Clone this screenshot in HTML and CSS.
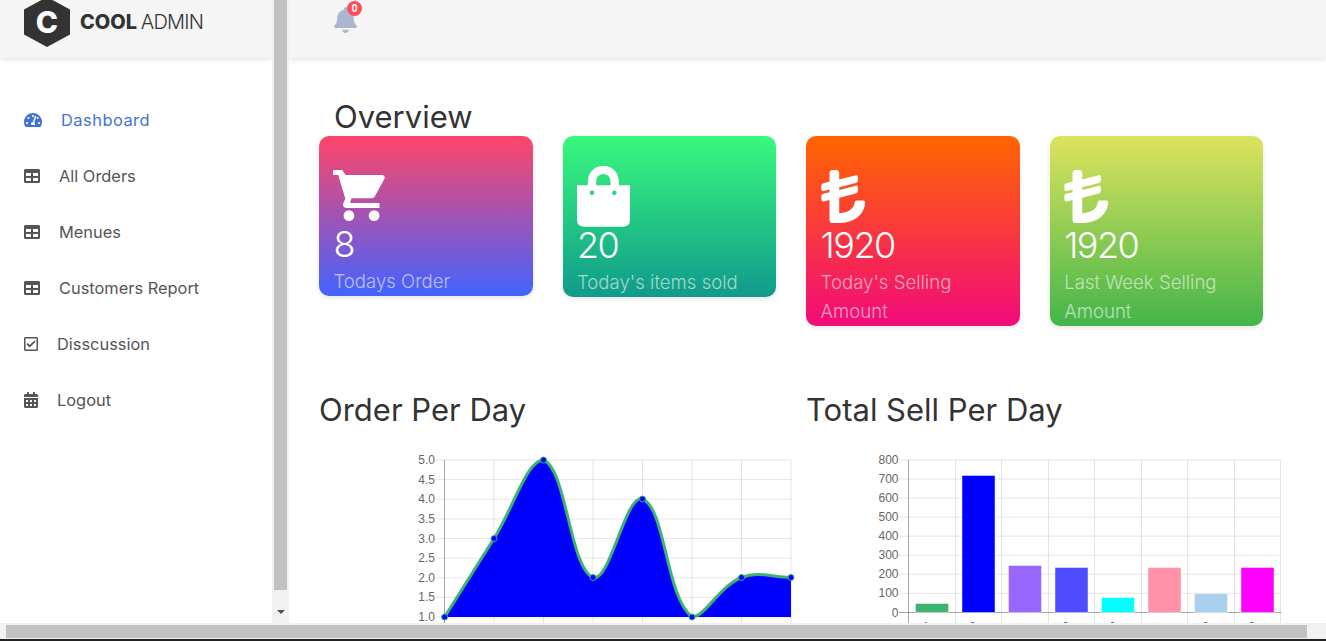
FILE: index.html
```html
<!DOCTYPE html>
<html>
  <head>
    <title>Cool Admin Dashboard</title>
    <link rel="stylesheet" href="styles.css">
  </head>
  <body>
    <div class="page">
      <div class="panes">
        <aside class="side">
          <div class="logo-bar">
            <span class="logo-hex">C</span>
            <span class="logo-text"><b>COOL</b> <span class="logo-light">ADMIN</span></span>
          </div>
          <ul class="side-menu">
            <li class="active">
              <svg class="ico-tacho" viewBox="0 0 576 512"><path d="M288 32C128.94 32 0 160.94 0 320c0 52.8 14.25 102.26 39.06 144.8 5.61 9.62 16.3 15.2 27.44 15.2h443c11.14 0 21.83-5.58 27.44-15.2C561.75 422.26 576 372.8 576 320c0-159.06-128.94-288-288-288zm0 64c14.71 0 26.58 10.13 30.32 23.65-1.11 2.26-2.64 4.23-3.45 6.67l-9.22 27.67c-5.13 3.49-10.97 6.01-17.64 6.01-17.67 0-32-14.33-32-32S270.33 96 288 96zM96 384c-17.67 0-32-14.33-32-32s14.33-32 32-32 32 14.33 32 32-14.33 32-32 32zm48-160c-17.67 0-32-14.33-32-32s14.33-32 32-32 32 14.33 32 32-14.33 32-32 32zm246.77-72.41l-61.33 184C343.13 347.33 352 364.54 352 384c0 11.72-3.38 22.55-8.88 32H232.88c-5.5-9.45-8.88-20.28-8.88-32 0-33.94 26.5-61.43 59.9-63.59l61.34-184.01c4.17-12.56 17.73-19.45 30.36-15.17 12.57 4.19 19.35 17.79 15.17 30.36zm14.66 57.2l15.52-46.55c3.47-1.29 7.13-2.23 11.05-2.23 17.67 0 32 14.33 32 32s-14.33 32-32 32c-11.38-.01-20.89-6.28-26.57-15.22zM480 384c-17.67 0-32-14.33-32-32s14.33-32 32-32 32 14.33 32 32-14.33 32-32 32z"/></svg>
              Dashboard
            </li>
            <li>
              <svg class="ico-table" viewBox="0 0 512 512"><path d="M464 32H48C21.49 32 0 53.49 0 80v352c0 26.51 21.49 48 48 48h416c26.51 0 48-21.49 48-48V80c0-26.51-21.49-48-48-48zM224 416H64v-96h160v96zm0-160H64v-96h160v96zm224 160H288v-96h160v96zm0-160H288v-96h160v96z"/></svg>
              All Orders
            </li>
            <li>
              <svg class="ico-table" viewBox="0 0 512 512"><path d="M464 32H48C21.49 32 0 53.49 0 80v352c0 26.51 21.49 48 48 48h416c26.51 0 48-21.49 48-48V80c0-26.51-21.49-48-48-48zM224 416H64v-96h160v96zm0-160H64v-96h160v96zm224 160H288v-96h160v96zm0-160H288v-96h160v96z"/></svg>
              Menues
            </li>
            <li>
              <svg class="ico-table" viewBox="0 0 512 512"><path d="M464 32H48C21.49 32 0 53.49 0 80v352c0 26.51 21.49 48 48 48h416c26.51 0 48-21.49 48-48V80c0-26.51-21.49-48-48-48zM224 416H64v-96h160v96zm0-160H64v-96h160v96zm224 160H288v-96h160v96zm0-160H288v-96h160v96z"/></svg>
              Customers Report
            </li>
            <li>
              <svg class="ico-small" viewBox="0 0 448 512"><path d="M400 32H48C21.49 32 0 53.49 0 80v352c0 26.51 21.49 48 48 48h352c26.51 0 48-21.49 48-48V80c0-26.51-21.49-48-48-48zm0 400H48V80h352v352zm-35.864-241.724L191.547 361.48c-4.705 4.667-12.303 4.637-16.97-.068l-90.781-91.516c-4.667-4.705-4.637-12.303.069-16.971l22.719-22.536c4.705-4.667 12.303-4.637 16.97.069l59.792 60.277 141.352-140.216c4.705-4.667 12.303-4.637 16.97.068l22.536 22.718c4.667 4.706 4.637 12.304-.068 16.971z"/></svg>
              Disscussion
            </li>
            <li>
              <svg class="ico-small" viewBox="0 0 448 512"><path d="M0 464c0 26.5 21.5 48 48 48h352c26.5 0 48-21.5 48-48V192H0v272zm320-196c0-6.6 5.4-12 12-12h40c6.6 0 12 5.4 12 12v40c0 6.6-5.4 12-12 12h-40c-6.6 0-12-5.4-12-12v-40zm0 128c0-6.6 5.4-12 12-12h40c6.6 0 12 5.4 12 12v40c0 6.6-5.4 12-12 12h-40c-6.6 0-12-5.4-12-12v-40zM192 268c0-6.6 5.4-12 12-12h40c6.6 0 12 5.4 12 12v40c0 6.6-5.4 12-12 12h-40c-6.6 0-12-5.4-12-12v-40zm0 128c0-6.6 5.4-12 12-12h40c6.6 0 12 5.4 12 12v40c0 6.6-5.4 12-12 12h-40c-6.6 0-12-5.4-12-12v-40zM64 268c0-6.6 5.4-12 12-12h40c6.6 0 12 5.4 12 12v40c0 6.6-5.4 12-12 12H76c-6.6 0-12-5.4-12-12v-40zm0 128c0-6.6 5.4-12 12-12h40c6.6 0 12 5.4 12 12v40c0 6.6-5.4 12-12 12H76c-6.6 0-12-5.4-12-12v-40zM400 64h-48V16c0-8.8-7.2-16-16-16h-32c-8.8 0-16 7.2-16 16v48H160V16c0-8.8-7.2-16-16-16h-32c-8.8 0-16 7.2-16 16v48H48C21.5 64 0 85.5 0 112v48h448v-48c0-26.5-21.5-48-48-48z"/></svg>
              Logout
            </li>
          </ul>
        </aside>

        <div class="vbar">
          <div class="vbar-thumb"></div>
          <div class="vbar-arrow"></div>
        </div>

        <main class="content">
          <header class="top-bar">
            <div class="bell">
              <svg viewBox="0 0 448 512"><path d="M224 512c35.32 0 63.97-28.65 63.97-64H160.03c0 35.35 28.65 64 63.97 64zm215.39-149.71c-19.32-20.76-55.47-51.99-55.47-154.29 0-77.7-54.48-139.9-127.94-155.16V32c0-17.67-14.32-32-31.98-32s-31.98 14.33-31.98 32v20.84C118.56 68.1 64.08 130.3 64.08 208c0 102.3-36.15 133.53-55.47 154.29-6 6.45-8.66 14.16-8.61 21.71.11 16.4 12.98 32 32.1 32h383.8c19.12 0 32-15.6 32.1-32 .05-7.55-2.61-15.27-8.61-21.71z"/></svg>
              <span class="badge">0</span>
            </div>
          </header>

          <h2 class="overview-title">Overview</h2>

          <div class="cards">
            <div class="card card-pink">
              <div class="card-icon short">
                <svg class="ico-cart" viewBox="70 120 154 152">
                  <path d="M70 120H97L107 135H214Q226 135 223 146L194 199Q191 204 185 204H125L120 218H208V233H112Q97 233 100 220L106 205L85 135H70Z"/>
                  <circle cx="117" cy="256" r="16"/>
                  <circle cx="192" cy="256" r="16"/>
                </svg>
              </div>
              <div class="card-num">8</div>
              <div class="card-label">Todays Order</div>
            </div>
            <div class="card card-green">
              <div class="card-icon">
                <svg class="ico-bag" viewBox="802 108 159 182">
                  <path d="M847 170V153A34 34 0 0 1 915 153V170" fill="none" stroke="#fff" stroke-width="25"/>
                  <path fill-rule="evenodd" d="M802 165H961V268Q961 290 939 290H824Q802 290 802 268ZM840 188a7 7 0 1 0 14 0a7 7 0 1 0-14 0ZM907 188a7 7 0 1 0 14 0a7 7 0 1 0-14 0Z"/>
                </svg>
              </div>
              <div class="card-num">20</div>
              <div class="card-label">Today's items sold</div>
            </div>
            <div class="card card-orange">
              <div class="card-icon">
                <svg class="ico-lira" viewBox="18 15 116 136">
                  <path d="M40 24Q40 15 49 15H56Q65 15 65 24V39L108 28Q113 27 113 33V42Q113 47 108 48L65 59V66L108 55Q113 54 113 60V69Q113 74 108 75L65 86V126C88 125 103 115 105 98Q105 93 110 93H127Q132 93 132 98C130 130 103 151 68 151H46Q40 151 40 145V92L25 96Q19 97 19 91V82Q19 77 24 76L40 72V65L25 69Q19 70 19 64V55Q19 50 24 49L40 45Z"/>
                </svg>
              </div>
              <div class="card-num">1920</div>
              <div class="card-label">Today's Selling Amount</div>
            </div>
            <div class="card card-lime">
              <div class="card-icon">
                <svg class="ico-lira" viewBox="18 15 116 136">
                  <path d="M40 24Q40 15 49 15H56Q65 15 65 24V39L108 28Q113 27 113 33V42Q113 47 108 48L65 59V66L108 55Q113 54 113 60V69Q113 74 108 75L65 86V126C88 125 103 115 105 98Q105 93 110 93H127Q132 93 132 98C130 130 103 151 68 151H46Q40 151 40 145V92L25 96Q19 97 19 91V82Q19 77 24 76L40 72V65L25 69Q19 70 19 64V55Q19 50 24 49L40 45Z"/>
                </svg>
              </div>
              <div class="card-num">1920</div>
              <div class="card-label">Last Week Selling Amount</div>
            </div>
          </div>

          <div class="charts">
            <section>
              <h2 class="chart-title">Order Per Day</h2>
              <svg class="chart" viewBox="319 450 487 173">
                <g class="grid">
                  <path d="M436 460H791M436 479.6H791M436 499.25H791M436 518.9H791M436 538.5H791M436 558.1H791M436 577.75H791M436 597.4H791M436 617H791"/>
                  <path d="M494 460V623M543.5 460V623M593 460V623M642.5 460V623M692 460V623M741.5 460V623M791 460V623"/>
                </g>
                <path class="axis" d="M444.5 460V623"/>
                <g class="ticks">
                  <text x="435" y="464">5.0</text>
                  <text x="435" y="483.6">4.5</text>
                  <text x="435" y="503.3">4.0</text>
                  <text x="435" y="522.9">3.5</text>
                  <text x="435" y="542.5">3.0</text>
                  <text x="435" y="562.1">2.5</text>
                  <text x="435" y="581.8">2.0</text>
                  <text x="435" y="601.4">1.5</text>
                  <text x="435" y="621">1.0</text>
                </g>
                <path class="line-fill" d="M444.6 617C444.6 617 474.2 569.9 494 538.5C513.8 507.1 526.8 460 543.5 460C566.5 469 570 568.5 593 577.5C609.6 584.1 625.9 492.4 642.5 499C665.5 508.2 665.5 596 692 617C705 617 719.3 586.3 741.5 577.5C758.9 570.5 771.2 577.5 791 577.5V617Z"/>
                <path class="line" d="M444.6 617C444.6 617 474.2 569.9 494 538.5C513.8 507.1 526.8 460 543.5 460C566.5 469 570 568.5 593 577.5C609.6 584.1 625.9 492.4 642.5 499C665.5 508.2 665.5 596 692 617C705 617 719.3 586.3 741.5 577.5C758.9 570.5 771.2 577.5 791 577.5"/>
                <g class="dots">
                  <circle cx="444.6" cy="617" r="3"/>
                  <circle cx="494" cy="538.5" r="3"/>
                  <circle cx="543.5" cy="460" r="3"/>
                  <circle cx="593" cy="577.5" r="3"/>
                  <circle cx="642.5" cy="499" r="3"/>
                  <circle cx="692" cy="617" r="3"/>
                  <circle cx="741.5" cy="577.5" r="3"/>
                  <circle cx="791" cy="577.5" r="3"/>
                </g>
              </svg>
            </section>
            <section>
              <h2 class="chart-title">Total Sell Per Day</h2>
              <svg class="chart" viewBox="806 450 487 173">
                <g class="grid">
                  <path d="M899 460H1281M899 479H1281M899 498.1H1281M899 517.2H1281M899 536.2H1281M899 555.3H1281M899 574.3H1281M899 593.3H1281"/>
                  <path d="M955.5 460V623M1001.5 460V623M1048.5 460V623M1094.5 460V623M1141.5 460V623M1187.5 460V623M1234.5 460V623M1280.5 460V623"/>
                </g>
                <path class="axis" d="M908.5 460V623M899 612.5H1281"/>
                <g class="ticks">
                  <text x="898.5" y="464">800</text>
                  <text x="898.5" y="483">700</text>
                  <text x="898.5" y="502.1">600</text>
                  <text x="898.5" y="521.2">500</text>
                  <text x="898.5" y="540.2">400</text>
                  <text x="898.5" y="559.3">300</text>
                  <text x="898.5" y="578.3">200</text>
                  <text x="898.5" y="597.3">100</text>
                  <text x="898.5" y="616.5">0</text>
                </g>
                <rect class="bar" x="915.5" y="603.5" width="33" height="9" fill="#3cb371"/>
                <rect class="bar" x="962" y="475.5" width="33" height="137" fill="#0000ff"/>
                <rect class="bar" x="1008.5" y="565.5" width="33" height="47" fill="#9966ff"/>
                <rect class="bar" x="1055" y="567.5" width="33" height="45" fill="#4d4dff"/>
                <rect class="bar" x="1101.5" y="597.5" width="33" height="15" fill="#00ffff"/>
                <rect class="bar" x="1148" y="567.5" width="33" height="45" fill="#ff91a9"/>
                <rect class="bar" x="1194.5" y="593.5" width="33" height="19" fill="#a9d1ee"/>
                <rect class="bar" x="1241" y="567.5" width="33" height="45" fill="#ff00ff"/>
                <g class="x-labels">
                  <text transform="translate(933 626) rotate(-50)">04-14</text>
                  <text transform="translate(979 626) rotate(-50)">04-20</text>
                  <text transform="translate(1026 626) rotate(-50)">04-21</text>
                  <text transform="translate(1072 626) rotate(-50)">04-20</text>
                  <text transform="translate(1119 626) rotate(-50)">05-10</text>
                  <text transform="translate(1165 626) rotate(-50)">05-11</text>
                  <text transform="translate(1212 626) rotate(-50)">05-20</text>
                  <text transform="translate(1258 626) rotate(-50)">05-30</text>
                </g>
              </svg>
            </section>
          </div>
        </main>
      </div>

      <div class="hbar"><div class="hbar-thumb"></div></div>
      <div class="bottom-line"></div>
    </div>
  </body>
</html>
```

FILE: styles.css
```css
html, body {
  margin: 0;
  height: 100%;
  overflow: hidden;
}
body {
  font-family: Inter, "Open Sans", sans-serif;
  color: #333;
  background: #fff;
}
.page {
  height: 641px;
  display: flex;
  flex-direction: column;
}
.panes {
  flex: 1;
  min-height: 0;
  display: flex;
}

/* left menu */
.side {
  width: 272px;
  flex-shrink: 0;
}
.logo-bar {
  height: 58px;
  width: 271px;
  box-sizing: border-box;
  padding: 0 0 14px 24px;
  display: flex;
  align-items: center;
  background: #f5f5f5;
  box-shadow: 0 2px 5px rgba(0, 0, 0, 0.1);
}
.logo-hex {
  width: 46px;
  height: 50px;
  flex-shrink: 0;
  display: flex;
  align-items: center;
  justify-content: center;
  background: #333;
  color: #fff;
  font-size: 30px;
  font-weight: 800;
  clip-path: polygon(50% 0, 100% 25%, 100% 75%, 50% 100%, 0 75%, 0 25%);
}
.logo-text {
  margin-left: 10px;
  font-size: 20px;
  white-space: nowrap;
  word-spacing: -2px;
}
.logo-text b {
  font-weight: 800;
}
.logo-light {
  font-weight: 300;
  letter-spacing: -0.8px;
}
.side-menu {
  list-style: none;
  margin: 0;
  padding: 34px 0 0 24px;
}
.side-menu li {
  height: 56px;
  display: flex;
  align-items: center;
  font-size: 16.4px;
  color: #555;
}
.side-menu li.active {
  color: #4272d7;
  letter-spacing: 0.5px;
}
.side-menu svg {
  margin-right: 19px;
  fill: currentColor;
  flex-shrink: 0;
}
.ico-tacho {
  width: 18px;
  height: 16px;
}
.ico-table {
  width: 16px;
  height: 16px;
}
.ico-small {
  width: 14px;
  height: 16px;
}

/* fake scrollbars of the screenshot */
.vbar {
  width: 17px;
  flex-shrink: 0;
  background: #f1f1f1;
  padding: 0 2px;
  box-sizing: border-box;
}
.vbar-thumb {
  height: 590px;
  background: #c1c1c1;
}
.vbar-arrow {
  width: 0;
  margin: 20px auto 0;
  border-top: 4px solid #505050;
  border-left: 4px solid transparent;
  border-right: 4px solid transparent;
}
.hbar {
  height: 16px;
  flex-shrink: 0;
  background: #f1f1f1;
  padding: 2px 19px 1px 6px;
  box-sizing: border-box;
}
.hbar-thumb {
  height: 13px;
  background: #c1c1c1;
}
.bottom-line {
  height: 2px;
  flex-shrink: 0;
  background: #222;
}

/* main column */
.content {
  flex: 1;
  min-width: 0;
  overflow: hidden;
}
.top-bar {
  height: 58px;
  box-sizing: border-box;
  padding: 7px 0 0 45px;
  background: #f5f5f5;
  box-shadow: 0 2px 5px rgba(0, 0, 0, 0.1);
}
.bell {
  position: relative;
  width: 23px;
  height: 26px;
}
.bell svg {
  display: block;
  width: 23px;
  height: 26px;
  fill: #acb6ce;
}
.badge {
  position: absolute;
  top: -6px;
  left: 13px;
  width: 15px;
  height: 15px;
  border-radius: 50%;
  background: #ff4b5a;
  color: #fff;
  font-family: "Liberation Sans", sans-serif;
  font-size: 11px;
  font-weight: bold;
  line-height: 15px;
  text-align: center;
}
.overview-title {
  margin: 40px 0 1px 45px;
  font-size: 31px;
  font-weight: 400;
  line-height: 37px;
}

.cards {
  display: grid;
  grid-template-columns: repeat(4, 213.6px);
  gap: 30px;
  align-items: start;
  padding-left: 30px;
}
.card {
  border-radius: 10px;
  padding: 30px 14px 0 14.4px;
  color: #fff;
  box-shadow: 0 2px 5px rgba(0, 0, 0, 0.1);
}
.card-pink { background: linear-gradient(to bottom, #ff4569, #4363ff); }
.card-green { background: linear-gradient(to bottom, #38f97d, #109a8c); }
.card-orange { background: linear-gradient(to bottom, #ff6600, #f20a7b); }
.card-lime { background: linear-gradient(to bottom, #dde35e, #44b549); }
.card-icon {
  height: 61px;
  display: flow-root;
}
.card-icon.short {
  height: 60px;
}
.card-icon svg {
  display: block;
  fill: #fff;
}
.ico-cart {
  width: 52px;
  height: 51px;
  margin-top: 4px;
}
.ico-bag {
  width: 53px;
  height: 61px;
}
.ico-lira {
  width: 45px;
  height: 53px;
  margin-top: 4px;
}
.card-num {
  font-size: 36px;
  font-weight: 300;
  line-height: 36px;
  letter-spacing: -1.5px;
}
.card-label {
  margin-top: 5px;
  font-size: 18.6px;
  font-weight: 300;
  line-height: 29px;
  color: rgba(255, 255, 255, 0.6);
}

.charts {
  display: grid;
  grid-template-columns: 487px 487px;
  margin-top: 66px;
  padding-left: 30px;
}
.chart-title {
  margin: 0 0 22px;
  font-size: 31px;
  font-weight: 400;
  line-height: 36px;
}
.chart {
  display: block;
  width: 487px;
  height: 173px;
}
.grid path {
  fill: none;
  stroke: rgba(0, 0, 0, 0.1);
}
.axis {
  fill: none;
  stroke: rgba(0, 0, 0, 0.35);
}
.ticks text {
  font-family: "Liberation Sans", sans-serif;
  font-size: 12px;
  fill: #666;
  text-anchor: end;
}
.line-fill {
  fill: #0000ff;
}
.line {
  fill: none;
  stroke: #3cb371;
  stroke-width: 3;
}
.dots circle {
  fill: #0000ff;
  stroke: #3cb371;
  stroke-width: 1;
}
.bar {
  stroke: rgba(255, 255, 255, 0.45);
}
.x-labels text {
  font-family: "Liberation Sans", sans-serif;
  font-size: 12px;
  fill: #666;
  text-anchor: end;
}
```
